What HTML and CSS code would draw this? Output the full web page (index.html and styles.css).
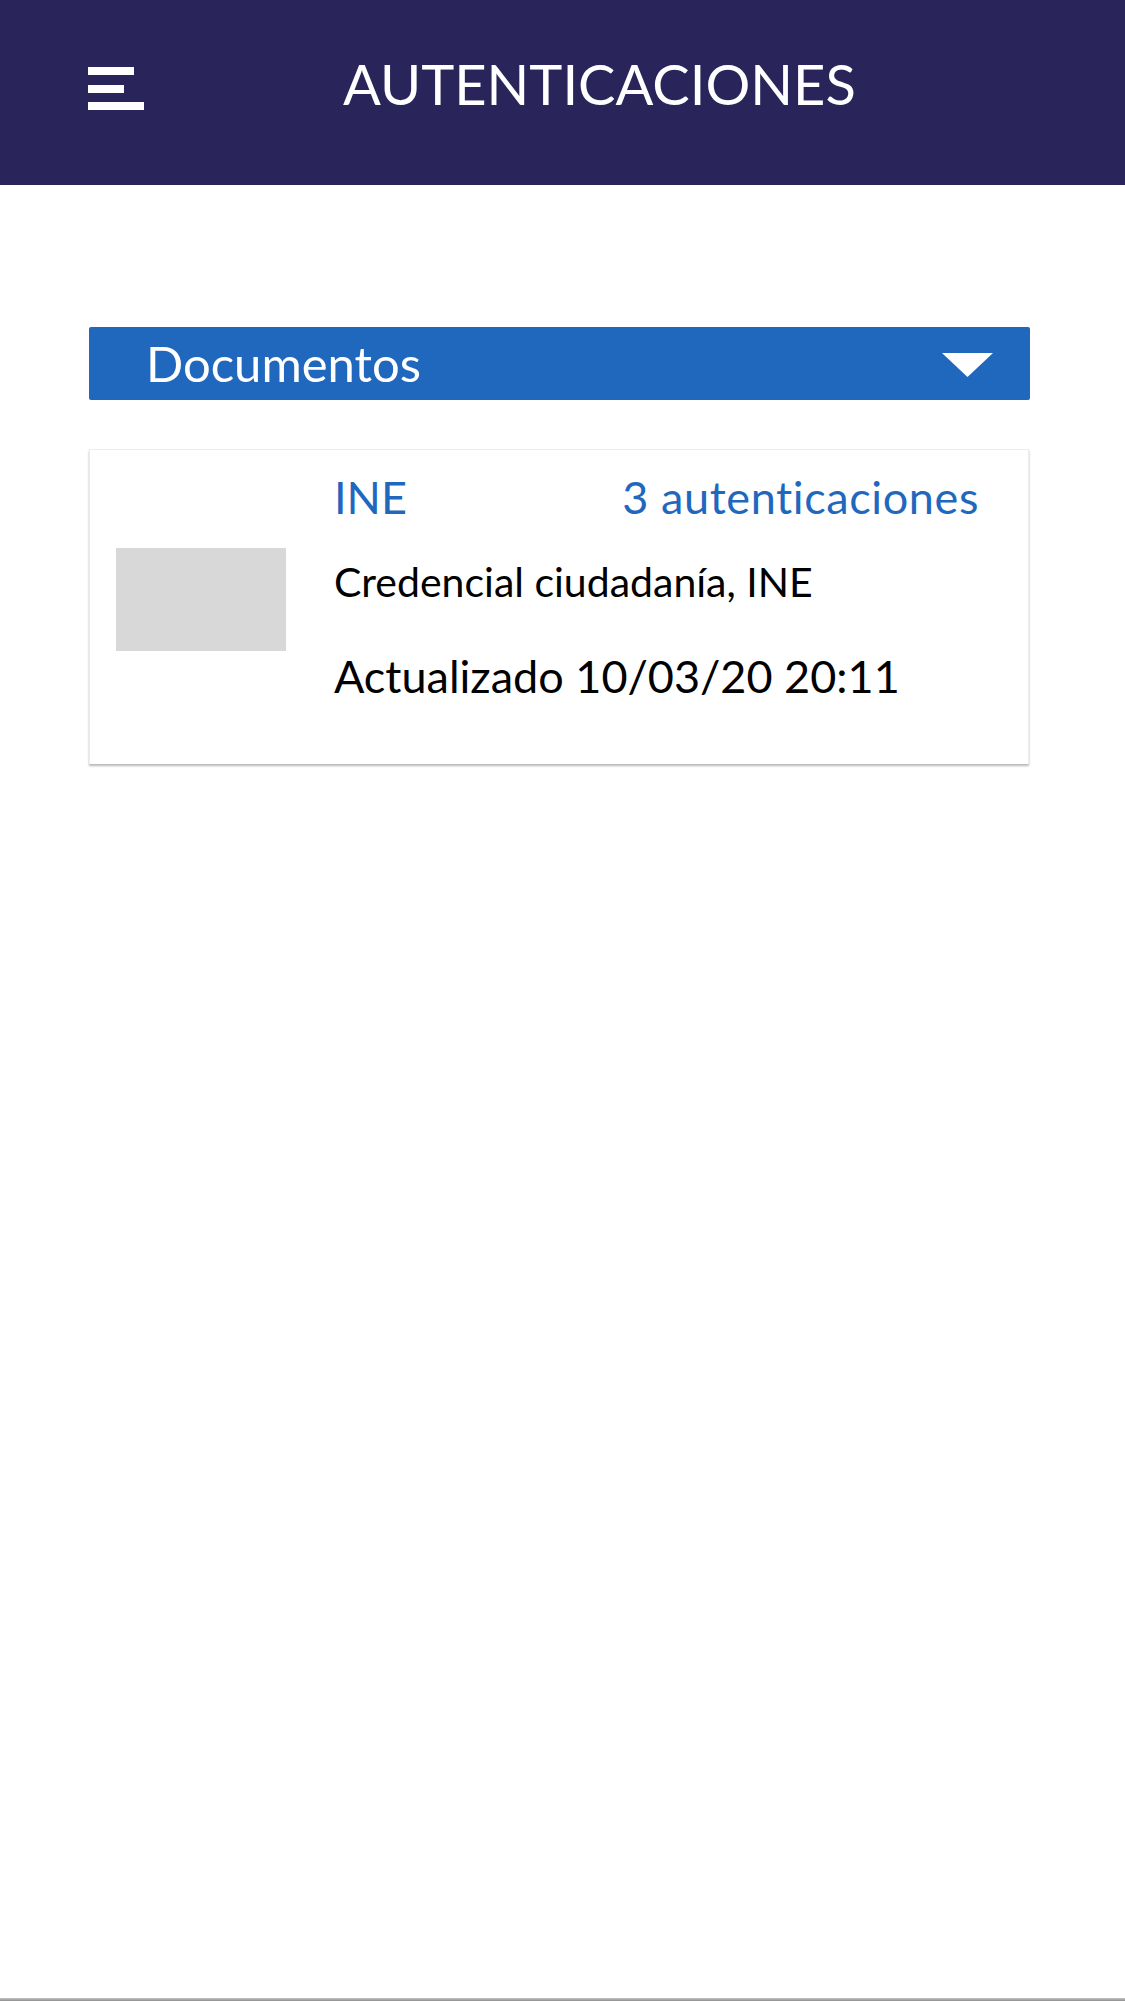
FILE: index.html
```html
<!DOCTYPE html>
<html lang="es">
<head>
<meta charset="utf-8">
<title>Autenticaciones</title>
<link rel="stylesheet" href="styles.css">
</head>
<body>
<div class="page">
  <header class="topbar">
    <svg class="menu" width="56" height="43" viewBox="0 0 56 43" aria-hidden="true">
      <rect x="0" y="0" width="46" height="8" fill="#fff"/>
      <rect x="0" y="18" width="36" height="8" fill="#fff"/>
      <rect x="0" y="35" width="56" height="8" fill="#fff"/>
    </svg>
    <h1 class="title">AUTENTICACIONES</h1>
  </header>
  <main class="content">
    <div class="select">
      <span class="select-label">Documentos</span>
      <svg class="caret" width="51" height="24" viewBox="0 0 51 24" aria-hidden="true">
        <polygon points="0,0 51,0 25.5,24" fill="#fff"/>
      </svg>
    </div>
    <div class="card">
      <div class="thumb"></div>
      <div class="info">
        <div class="info-head">
          <span class="doc-name">INE</span>
          <span class="doc-count">3 autenticaciones</span>
        </div>
        <div class="doc-desc">Credencial ciudadanía, INE</div>
        <div class="doc-date">Actualizado 10/03/20 20:11</div>
      </div>
    </div>
  </main>
  <div class="bottom-edge"></div>
</div>
</body>
</html>
```
FILE: styles.css
```css
html, body {
  margin: 0;
  padding: 0;
  background: #ffffff;
}
body {
  font-family: "Lato", "Liberation Sans", sans-serif;
  color: #000;
}
.page {
  min-height: 2001px;
  display: flex;
  flex-direction: column;
}
.topbar {
  height: 185px;
  box-sizing: border-box;
  background: #29255a;
  display: flex;
  align-items: flex-start;
  padding: 67px 0 0 88px;
}
.menu {
  display: block;
  flex: none;
}
.title {
  margin: -11px 0 0 199px;
  font-size: 56px;
  line-height: 56px;
  font-weight: 400;
  color: #fff;
  letter-spacing: 0;
}
.content {
  padding: 142px 95px 0 89px;
}
.select {
  height: 73px;
  background: #1f68be;
  border-radius: 2px;
  display: flex;
  align-items: center;
  justify-content: space-between;
  padding: 0 37px 0 57px;
}
.select-label {
  color: #fff;
  font-size: 49px;
  line-height: 49px;
}
.caret {
  display: block;
  margin-top: 3px;
}
.card {
  margin-top: 49px;
  width: 940px;
  height: 315px;
  box-sizing: border-box;
  border: 1px solid #ececec;
  border-bottom: none;
  box-shadow: 0 2px 2px rgba(0,0,0,0.28);
  display: flex;
  align-items: flex-start;
  padding: 0 49px 0 26px;
}
.thumb {
  width: 170px;
  height: 103px;
  background: #d8d8d8;
  margin-top: 98px;
  flex: none;
}
.info {
  margin-left: 48px;
  flex: 1;
  padding-top: 25px;
}
.info-head {
  display: flex;
  justify-content: space-between;
  font-size: 45px;
  line-height: 45px;
  color: #1f68be;
}
.doc-count {
  letter-spacing: 0.6px;
}
.doc-desc {
  margin-top: 41px;
  font-size: 41px;
  line-height: 41px;
}
.doc-date {
  margin-top: 52px;
  font-size: 45px;
  line-height: 45px;
}
.bottom-edge {
  margin-top: auto;
  height: 3px;
  background: linear-gradient(#c4c4c4, #8f8f8f);
}
```
